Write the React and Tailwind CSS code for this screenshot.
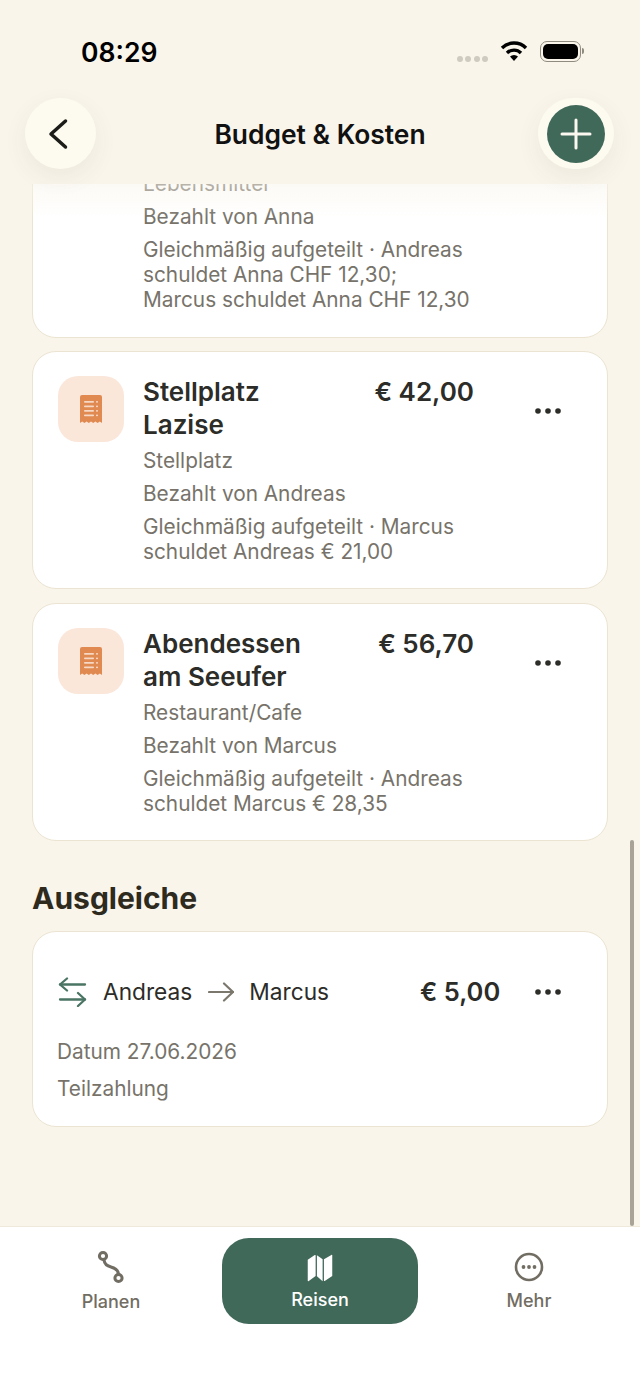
import { Plus } from 'lucide-react'

const FONT = "font-['Inter','Liberation_Sans',sans-serif]"

// ── Small drawn icons ──
function ReceiptIcon() {
  return (
    <svg width="24" height="30" viewBox="0 0 24 30">
      <path d="M3 1h18a2 2 0 0 1 2 2v26l-2.200-1.600L18.600 29l-2.200-1.600L14.200 29 12 27.400 9.800 29l-2.200-1.600L5.400 29l-2.200-1.600L1 29V3a2 2 0 0 1 2-2z" fill="#e08a52" />
      <g fill="#fbe6da" opacity="0.85">
        <rect x="5" y="7" width="10" height="1.800" rx="0.800" />
        <rect x="5" y="11.500" width="10" height="1.800" rx="0.800" />
        <rect x="5" y="16" width="10" height="1.800" rx="0.800" />
        <rect x="5" y="20.500" width="10" height="1.800" rx="0.800" />
        <rect x="17" y="7" width="2" height="1.800" rx="0.800" />
        <rect x="17" y="11.500" width="2" height="1.800" rx="0.800" />
        <rect x="17" y="16" width="2" height="1.800" rx="0.800" />
        <rect x="17" y="20.500" width="2" height="1.800" rx="0.800" />
      </g>
    </svg>
  )
}

function Dots() {
  return (
    <svg width="28" height="6" viewBox="0 0 28 6" fill="#2c2c28">
      <circle cx="4" cy="3" r="2.800" />
      <circle cx="14" cy="3" r="2.800" />
      <circle cx="24" cy="3" r="2.800" />
    </svg>
  )
}

function Wifi() {
  return (
    <svg width="28" height="22" viewBox="0 0 28 22" fill="none" stroke="#000" strokeWidth="3.400">
      <path d="M2 8a17 17 0 0 1 24 0" />
      <path d="M7 13a10 10 0 0 1 14 0" />
      <path d="M14 21l-4-4.400a5.600 5.600 0 0 1 8 0z" fill="#000" stroke="none" />
    </svg>
  )
}

function Battery() {
  return (
    <div className="flex items-center gap-[1px]">
      <div className="w-[41px] h-[21px] rounded-[7px] border-[1.500px] border-[#8f8b80] p-[2px]">
        <div className="w-full h-full rounded-[5px] bg-black" />
      </div>
      <div className="w-[2px] h-[6px] rounded-r-full bg-[#8f8b80]" />
    </div>
  )
}

function BackChevron() {
  return (
    <svg width="22" height="32" viewBox="0 0 22 32" fill="none" stroke="#1c1c18" strokeWidth="3.500" strokeLinecap="round" strokeLinejoin="round" className="mr-[5px]">
      <path d="M18.500 3 4 16l14.500 13" />
    </svg>
  )
}

function SwapIcon() {
  return (
    <svg width="30" height="30" viewBox="0 0 30 30" fill="none" stroke="#4a7464" strokeWidth="2.300" strokeLinecap="round" strokeLinejoin="round">
      <path d="M10 1.500 3 7.500l7 6" />
      <path d="M3 7.500h25" />
      <path d="M21 16l7 6.500-7 6.500" />
      <path d="M28 22.500H3" />
    </svg>
  )
}

function ThinArrow() {
  return (
    <svg width="26" height="20" viewBox="0 0 26 20" fill="none" stroke="#7b776c" strokeWidth="2.200" strokeLinecap="round" strokeLinejoin="round">
      <path d="M1 10h24" />
      <path d="M16 1.500 25 10l-9 8.500" />
    </svg>
  )
}

function RouteIcon() {
  return (
    <svg width="28" height="34" viewBox="0 0 28 34" fill="none" stroke="#716d63" strokeWidth="3">
      <circle cx="6" cy="6" r="3.600" />
      <circle cx="21.500" cy="28" r="3.600" />
      <path d="M7 10c.5 4 3 6 7 7s7 3 7.500 7" strokeLinecap="round" />
    </svg>
  )
}

function MapIcon() {
  return (
    <svg width="28" height="28" viewBox="0 0 30 32" fill="#fff">
      <path d="M1 6.500 9 1.200a.6.6 0 0 1 1 .5V25L1.800 31a.6.6 0 0 1-.8-.5z" />
      <path d="M11.500 1.500 18 6v25l-6.500-5.500z" />
      <path d="M19.500 6 28 1a.6.6 0 0 1 1 .5V25l-8.600 5.800a.6.6 0 0 1-.9-.5z" />
    </svg>
  )
}

function MoreIcon() {
  return (
    <svg width="30" height="30" viewBox="0 0 30 30" fill="#716d63" className="mt-[2px]">
      <circle cx="15" cy="15" r="13" fill="none" stroke="#716d63" strokeWidth="2.600" />
      <circle cx="9.500" cy="15" r="1.900" />
      <circle cx="15" cy="15" r="1.900" />
      <circle cx="20.500" cy="15" r="1.900" />
    </svg>
  )
}

function ExpenseCard({ title, amount, category, paidBy, split }) {
  return (
    <div className="flex bg-white rounded-[24px] border border-[#ece4d2] pl-[25px] pt-[24px] pb-[24px]">
      <div className="w-[66px] h-[66px] rounded-[20px] bg-[#fbe6da] flex items-center justify-center shrink-0">
        <ReceiptIcon />
      </div>
      <div className="w-[331px] ml-[19px]">
        <div className="flex justify-between">
          <div className="w-[190px] text-[26px] leading-[32.500px] font-semibold text-[#2c2c28]">{title}</div>
          <div className="text-[26px] leading-[32.500px] font-semibold text-[#2c2c28]">{amount}</div>
        </div>
        <div className="mt-[7px] text-[20.800px] leading-[25px] text-[#77736a]">{category}</div>
        <div className="mt-[8px] text-[20.800px] leading-[25px] text-[#77736a]">{paidBy}</div>
        <div className="mt-[8px] text-[20.800px] leading-[25px] text-[#77736a]">{split}</div>
      </div>
      <div className="ml-[60px] mt-[32px] h-[6px]">
        <Dots />
      </div>
    </div>
  )
}

function NavItem({ label, children }) {
  return (
    <div className="flex flex-col items-center">
      <div className="h-[36px] flex items-center">{children}</div>
      <div className="mt-[5px] text-[18px] leading-[24px] font-medium text-[#716d63]">{label}</div>
    </div>
  )
}

export default function App() {
  return (
    <div className={`${FONT} relative h-[1391px] w-[640px] overflow-hidden flex flex-col bg-[#f9f5eb]`}>
      {/* Status bar + header */}
      <header className="relative z-10 h-[184px] shrink-0 bg-[#f9f5eb]">
        <div className="h-[98px] flex items-start justify-between pl-[81px] pr-[56px] pt-[35px]">
          <div className="text-[26.500px] leading-[34px] font-semibold text-black">08:29</div>
          <div className="flex items-center gap-[12px] pt-[5px]">
            <div className="flex gap-[2.300px] mt-[16px]">
              <span className="w-[6px] h-[6px] rounded-full bg-[#cfcbc0]" />
              <span className="w-[6px] h-[6px] rounded-full bg-[#cfcbc0]" />
              <span className="w-[6px] h-[6px] rounded-full bg-[#cfcbc0]" />
              <span className="w-[6px] h-[6px] rounded-full bg-[#cfcbc0]" />
            </div>
            <Wifi />
            <Battery />
          </div>
        </div>
        <div className="flex items-center justify-between pl-[25px] pr-[26px]">
          <button className="w-[71px] h-[71px] rounded-full bg-[#fdfbf0] flex items-center justify-center shadow-[0_8px_24px_rgba(80,70,40,0.07)]">
            <BackChevron />
          </button>
          <div className="ml-[6px] text-[26.400px] leading-[32px] font-semibold text-[#111]">Budget &amp; Kosten</div>
          <button className="w-[76px] h-[71px] rounded-full bg-[#fdfbf0] flex items-center justify-center shadow-[0_8px_24px_rgba(80,70,40,0.07)]">
            <span className="w-[58px] h-[58px] rounded-full bg-[#41695a] flex items-center justify-center">
              <Plus size={48} strokeWidth={1.500} color="#fbf8ef" />
            </span>
          </button>
        </div>
      </header>

      {/* Scroll content */}
      <main className="relative flex-1 overflow-hidden px-[32px]">
        <div className="-mt-[60px] bg-white rounded-[24px] border border-[#ece4d2] pl-[110px] pt-[46px] pb-[25px]">
          <div className="text-[20.800px] leading-[25px] text-[#77736a]">Lebensmittel</div>
          <div className="mt-[8px] text-[20.800px] leading-[25px] text-[#77736a]">Bezahlt von Anna</div>
          <div className="mt-[8px] text-[20.800px] leading-[25px] text-[#77736a]">
            Gleichmäßig aufgeteilt · Andreas<br />schuldet Anna CHF 12,30;<br />Marcus schuldet Anna CHF 12,30
          </div>
        </div>

        <div className="mt-[13px] flex flex-col gap-[14px]">
          <ExpenseCard
            title="Stellplatz Lazise"
            amount="€ 42,00"
            category="Stellplatz"
            paidBy="Bezahlt von Andreas"
            split={<>Gleichmäßig aufgeteilt · Marcus<br />schuldet Andreas € 21,00</>}
          />
          <ExpenseCard
            title="Abendessen am Seeufer"
            amount="€ 56,70"
            category="Restaurant/Cafe"
            paidBy="Bezahlt von Marcus"
            split={<>Gleichmäßig aufgeteilt · Andreas<br />schuldet Marcus € 28,35</>}
          />
        </div>

        <h2 className="mt-[38px] text-[30px] leading-[38px] font-bold text-[#2f2a1e]">Ausgleiche</h2>

        <div className="mt-[14px] h-[196px] bg-white rounded-[24px] border border-[#ece4d2] pl-[24px] pt-[40px]">
          <div className="flex items-center h-[40px]">
            <SwapIcon />
            <span className="ml-[16px] text-[22.700px] leading-[30px] text-[#2c2c28]">Andreas</span>
            <span className="ml-[16px]"><ThinArrow /></span>
            <span className="ml-[15px] text-[22.700px] leading-[30px] text-[#2c2c28]">Marcus</span>
            <span className="ml-[91px] text-[25.500px] leading-[32px] font-semibold text-[#2c2c28]">€ 5,00</span>
            <span className="ml-[34px]"><Dots /></span>
          </div>
          <div className="mt-[27px] text-[20.800px] leading-[25px] text-[#77736a]">Datum 27.06.2026</div>
          <div className="mt-[12px] text-[20.800px] leading-[25px] text-[#77736a]">Teilzahlung</div>
        </div>

        {/* fade under the header */}
        <div className="absolute top-0 inset-x-0 h-[34px] bg-gradient-to-b from-[#f9f5eb]/50 to-transparent" />
        {/* scroll indicator */}
        <div className="absolute right-[6px] top-[656px] bottom-0 w-[4px] rounded-full bg-[#a8a396]" />
      </main>

      {/* Tab bar */}
      <nav className="h-[165px] shrink-0 bg-white border-t border-[#efe9dc] grid grid-cols-[222px_196px_222px] pt-[11px]">
        <div className="flex justify-center pt-[11px]">
          <NavItem label="Planen"><RouteIcon /></NavItem>
        </div>
        <div className="h-[86px] rounded-[27px] bg-[#41695a] flex flex-col items-center pt-[16px]">
          <MapIcon />
          <div className="mt-[6px] text-[18px] leading-[24px] font-medium text-white">Reisen</div>
        </div>
        <div className="flex justify-center pt-[10px]">
          <NavItem label="Mehr"><MoreIcon /></NavItem>
        </div>
      </nav>
    </div>
  )
}
